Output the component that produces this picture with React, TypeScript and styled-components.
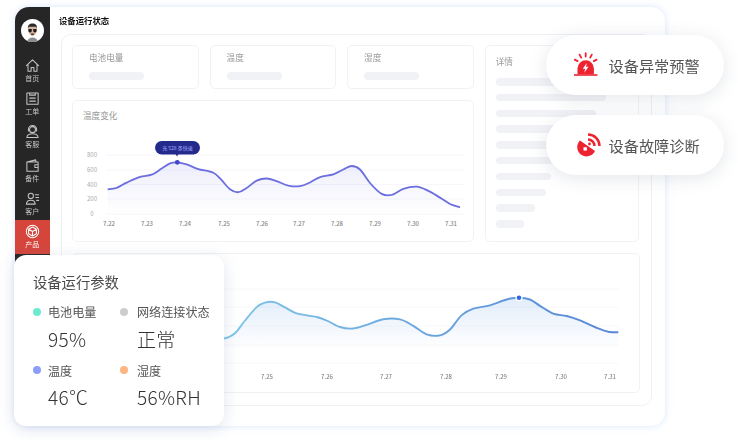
import React from 'react'
import styled, { createGlobalStyle } from 'styled-components'

const FONT = '"Noto Sans CJK SC", "Noto Sans", sans-serif'

const GlobalStyle = createGlobalStyle`
  html, body {
    margin: 0;
    padding: 0;
    background: #fff;
    font-family: ${FONT};
  }
  * {
    box-sizing: border-box;
  }
`

type Pt = [number, number]

// the points are read off by eye, so even them out a little first
function relax(pts: Pt[]): Pt[] {
  return pts.map((p, i) => {
    const a = pts[i - 1]
    const b = pts[i + 1]
    if (!a || !b) return p
    return [p[0], (a[1] + 8 * p[1] + b[1]) / 10] as Pt
  })
}

// smooth line through the points, catmull-rom to bezier
function smooth(pts: Pt[]) {
  let d = `M${pts[0][0]} ${pts[0][1]}`
  for (let i = 0; i < pts.length - 1; i++) {
    const p0 = pts[i - 1] || pts[i]
    const p1 = pts[i]
    const p2 = pts[i + 1]
    const p3 = pts[i + 2] || p2
    const c1x = p1[0] + (p2[0] - p0[0]) / 6
    const c1y = p1[1] + (p2[1] - p0[1]) / 6
    const c2x = p2[0] - (p3[0] - p1[0]) / 6
    const c2y = p2[1] - (p3[1] - p1[1]) / 6
    d += ` C${c1x.toFixed(1)} ${c1y.toFixed(1)} ${c2x.toFixed(1)} ${c2y.toFixed(1)} ${p2[0].toFixed(1)} ${p2[1].toFixed(1)}`
  }
  return d
}

const tempRaw: Pt[] = [
  [113, 268], [140, 265], [170, 248], [210, 229], [245, 226], [275, 205], [300, 189], [322, 186],
  [350, 192], [385, 208], [430, 217], [455, 240], [480, 270], [505, 279], [530, 265], [560, 240],
  [590, 234], [620, 243], [655, 258], [690, 260], [720, 248], [750, 230], [790, 224], [820, 208],
  [845, 196], [870, 205], [900, 250], [935, 285], [965, 287], [1000, 265], [1040, 258], [1075, 272],
  [1110, 293], [1140, 313], [1170, 322],
]
const tempLine: Pt[] = relax(tempRaw.map(([x, y]) => [70 + x / 3, 100 + y / 3]))

const humRaw: Pt[] = [
  [-60, 300], [12, 300], [45, 285], [75, 245], [110, 201], [135, 190], [165, 188], [195, 205], [230, 224],
  [290, 234], [320, 243], [360, 266], [400, 270], [440, 258], [490, 239], [540, 239], [580, 260],
  [620, 289], [660, 291], [690, 275], [725, 225], [760, 208], [810, 200], [860, 180], [897, 175],
  [930, 180], [960, 200], [1000, 226], [1040, 230], [1080, 243], [1130, 268], [1165, 279], [1195, 280],
]
const humLine: Pt[] = relax(humRaw.map(([x, y]) => [220 + x / 3, 240 + y / 3]))

const tempTicks = [
  ['7.22', 109], ['7.23', 147], ['7.24', 185], ['7.25', 224], ['7.26', 262],
  ['7.27', 299], ['7.28', 337], ['7.29', 375], ['7.30', 413], ['7.31', 451],
] as const
const tempGrid = [
  ['800', 155], ['600', 170], ['400', 184.5], ['200', 199], ['0', 214],
] as const
const humTicks = [
  ['7.25', 267], ['7.26', 327], ['7.27', 386], ['7.28', 446], ['7.29', 501], ['7.30', 561], ['7.31', 610],
] as const
const humGrid = [290, 308, 327, 346, 364]

const detailBars = [94, 110, 100, 90, 76, 66, 55, 50, 39, 28]

const Stage = styled.div`
  position: relative;
  width: 738px;
  height: 440px;
  overflow: hidden;
  background: #fff;
  padding: 7px 0 0 15px;
`

const Window = styled.div`
  display: flex;
  width: 650px;
  height: 419px;
  background: #fff;
  border-radius: 14px;
  box-shadow: 0 0 7px rgba(185, 208, 250, 0.55);
  filter: blur(0.3px);
`

const Sidebar = styled.nav`
  display: flex;
  flex-direction: column;
  flex: 0 0 34.5px;
  margin-bottom: 12px;
  background: #262626;
  border-radius: 14px 0 0 0;
  padding-top: 12px;
`

const Avatar = styled.div`
  width: 23px;
  height: 23px;
  margin: 0 0 11.5px 6px;
  border-radius: 50%;
  background: #fff;
  overflow: hidden;
  svg {
    display: block;
  }
`

const NavItem = styled.div<{ $active?: boolean }>`
  display: flex;
  flex-direction: column;
  align-items: center;
  height: 33.4px;
  padding-top: 4px;
  background: ${p => (p.$active ? '#d5453b' : 'transparent')};
  color: ${p => (p.$active ? '#fff' : '#c4c4c4')};
  font-size: 7px;
  line-height: 9px;
  svg {
    width: 15px;
    height: 15px;
    margin-bottom: 1px;
    fill: none;
    stroke: currentColor;
    stroke-width: 1.1;
    stroke-linejoin: round;
    stroke-linecap: round;
  }
`

const Main = styled.main`
  flex: 1;
  display: flex;
  flex-direction: column;
  padding-left: 9.5px;
`

const PageTitle = styled.h1`
  margin: 0;
  height: 27px;
  font-size: 8.4px;
  line-height: 26px;
  font-weight: 700;
  color: #111;
`

const Panel = styled.section`
  width: 591px;
  height: 372px;
  margin-left: 1.5px;
  border: 1px solid #eef0f4;
  border-radius: 10px;
  padding: 10px 12px 0 10.5px;
`

const TopArea = styled.div`
  display: flex;
  gap: 11px;
`

const LeftColumn = styled.div`
  display: flex;
  flex-direction: column;
  gap: 11px;
  width: 402px;
`

const StatRow = styled.div`
  display: flex;
  gap: 11px;
`

const Box = styled.div`
  background: #fff;
  border: 1px solid #f1f2f5;
  border-radius: 5px;
`

const StatCard = styled(Box)`
  flex: 1;
  height: 44px;
  padding: 4px 0 0 16px;
`

const SoftLabel = styled.div`
  font-size: 8.6px;
  line-height: 14px;
  color: #999;
`

const SkeletonBar = styled.div<{ $w: number }>`
  width: ${p => p.$w}px;
  height: 7.5px;
  border-radius: 4px;
  background: #f1f2f6;
`

const StatBar = styled(SkeletonBar)`
  margin-top: 8px;
`

const ChartCard = styled(Box)`
  position: relative;
  height: 142px;
`

const ChartTitle = styled(SoftLabel)`
  padding: 6.5px 0 0 10px;
`

const FloatSvg = styled.svg`
  position: absolute;
  left: -1px;
  top: -1px;
`

const DetailCard = styled(Box)`
  width: 154px;
  height: 197px;
  padding: 7.5px 0 0 10px;
`

const DetailBars = styled.div`
  display: flex;
  flex-direction: column;
  gap: 8.3px;
  margin-top: 10.5px;
`

const WideCard = styled(Box)`
  height: 140px;
  width: 568px;
  margin-top: 11px;
  svg {
    display: block;
  }
`

const ParamCard = styled.aside`
  position: absolute;
  left: 14px;
  top: 255px;
  width: 210px;
  height: 171px;
  padding: 17px 0 0 19px;
  background: #fff;
  border-radius: 12px;
  box-shadow: 0 3px 16px rgba(110, 130, 175, 0.22);
`

const ParamTitle = styled.div`
  font-size: 14.3px;
  line-height: 20px;
  color: #4a4a4a;
`

const ParamGrid = styled.div`
  display: grid;
  grid-template-columns: 87px 1fr;
  row-gap: 9px;
  margin-top: 11px;
`

const ParamCell = styled.div<{ $gap: number }>`
  display: grid;
  grid-template-columns: 8px 1fr;
  column-gap: ${p => p.$gap}px;
  align-items: center;
`

const Dot = styled.span<{ $c: string }>`
  width: 8px;
  height: 8px;
  border-radius: 50%;
  background: ${p => p.$c};
`

const ParamLabel = styled.div`
  font-size: 12.1px;
  line-height: 17px;
  color: #555;
  white-space: nowrap;
`

const ParamValue = styled.div`
  grid-column: 2;
  font-size: 19px;
  letter-spacing: 0.3px;
  line-height: 28px;
  margin-top: 4.5px;
  font-weight: 300;
  color: #333;
  white-space: nowrap;
`

const Pills = styled.div`
  position: absolute;
  left: 546px;
  top: 35px;
  display: flex;
  flex-direction: column;
  gap: 20px;
`

const Pill = styled.div`
  display: flex;
  align-items: center;
  gap: 10.5px;
  width: 178px;
  height: 60px;
  padding-left: 28px;
  background: #fff;
  border-radius: 30px;
  box-shadow: 0 3px 18px rgba(90, 100, 130, 0.16);
  font-size: 15.2px;
  color: #555;
  white-space: nowrap;
  svg {
    flex: none;
    overflow: visible;
  }
`

const navItems: { label: string; icon: React.ReactNode; active?: boolean }[] = [
  {
    label: '首页',
    icon: <path d="M1.5 8.2 8 2l6.5 6.2M3.2 7v7.2h3.3v-4h3v4h3.3V7" />,
  },
  {
    label: '工单',
    icon: <path d="M2 2.2h12v12H2zM5 2.2v2.2h6V2.2M5 7.6h6M5 10.8h6" />,
  },
  {
    label: '客服',
    icon: (
      <>
        <circle cx="8" cy="6" r="3.2" />
        <path d="M3.6 7.4V6a4.4 4.4 0 0 1 8.8 0v1.4M2 14.4c.3-2.6 2.6-4 6-4s5.7 1.4 6 4z" />
      </>
    ),
  },
  {
    label: '备件',
    icon: <path d="M2 4.2 11.5 2v2.2M2 4.2h12v10H2zM10.5 7.2H14v3h-3.5z" />,
  },
  {
    label: '客户',
    icon: (
      <>
        <circle cx="6.2" cy="5.2" r="2.8" />
        <path d="M1.5 14c.2-2.8 2-4.2 4.700-4.200s4.500 1.400 4.700 4.200zM11 4h3.500M11.500 7h3M12.500 10h2" />
      </>
    ),
  },
  {
    label: '产品',
    active: true,
    icon: (
      <>
        <circle cx="8" cy="8" r="6.6" />
        <path d="M8 3.2 12.2 5.6v4.800L8 12.800 3.800 10.400V5.600zM3.800 5.600 8 8l4.200-2.400M8 8v4.800" />
      </>
    ),
  },
]

const params = [
  { color: '#6fe8d2', label: '电池电量', value: '95%', gap: 7 },
  { color: '#cdcdcd', label: '网络连接状态', value: '正常', gap: 9 },
  { color: '#8d9dfb', label: '温度', value: '46℃', gap: 7 },
  { color: '#ffb581', label: '湿度', value: '56%RH', gap: 9 },
]

function AvatarFace() {
  return (
    <svg width="23" height="23" viewBox="0 0 23 23">
      <path d="M6 23c.5-3 2.8-4.500 5.500-4.500s5 1.500 5.500 4.500z" fill="#8b8f92" />
      <ellipse cx="11.5" cy="11" rx="4.3" ry="5.6" fill="#d9b39c" />
      <path d="M7 10c-.6-4 1.700-5.600 4.500-5.600S16.600 6 16 10l-.8-2.200H7.800z" fill="#2a2a2a" />
      <path d="M7.400 10h3.400v1.800a1.500 1.500 0 0 1-3.400 0zM12.200 10h3.400v1.800a1.500 1.500 0 0 1-3.400 0z" fill="#1c1c1c" />
      <path d="M9.800 14.600h3.400l-.6 1.600h-2.200z" fill="#4a4038" />
    </svg>
  )
}

function AlarmIcon() {
  return (
    <svg width="24" height="24" viewBox="0 0 24 24">
      <path d="M0 21.2h23.5v1.600H0z" fill="#ee2330" />
      <path d="M3.5 21.2V15.500a8.200 8.200 0 0 1 16.400 0v5.700z" fill="#ee2330" />
      <path d="M12.800 10 8.800 15.800h2.400l-.9 4 4.200-6H12z" fill="#fff" />
      <path
        d="M11.7.2v3.400M5.600 1.600l1.600 3M17.800 1.600l-1.600 3M.8 6.600l2.800 1.500M22.600 6.600l-2.800 1.500"
        stroke="#ee2330"
        strokeWidth="1.8"
        strokeLinecap="round"
        fill="none"
      />
    </svg>
  )
}

function DishIcon() {
  return (
    <svg width="24" height="24" viewBox="0 0 24 24">
      <path d="M6 7.500A9.300 9.300 0 1 0 21 18z" fill="#ee2330" />
      <path d="M9.500 14.200h3.400v3.400H9.500z" fill="#fff" />
      <path
        d="M14 6.500a6.500 6.500 0 0 1 6.500 6.500M14 1.500A11.500 11.500 0 0 1 25.500 13"
        stroke="#ee2330"
        strokeWidth="2.5"
        fill="none"
      />
      <circle cx="15.5" cy="11" r="1.4" fill="#ee2330" />
    </svg>
  )
}

function TempChart() {
  const line = smooth(tempLine)
  return (
    <FloatSvg width="402" height="142" viewBox="72 100 402 142">
      <defs>
        <linearGradient id="tempFill" x1="0" y1="0" x2="0" y2="1">
          <stop offset="0" stopColor="#6a6ce0" stopOpacity="0.12" />
          <stop offset="1" stopColor="#6a6ce0" stopOpacity="0" />
        </linearGradient>
      </defs>
      {tempGrid.map(([label, y]) => (
        <g key={label}>
          <line x1="106" x2="464" y1={y} y2={y} stroke="#f4f4fa" strokeWidth="0.8" />
          <text x="92" y={y + 2} fontSize="6" fill="#aaa" textAnchor="middle" fontFamily={FONT}>
            {label}
          </text>
        </g>
      ))}
      <path d={`${line} L460 214 L108 214 Z`} fill="url(#tempFill)" />
      <path d={line} fill="none" stroke="#6c6ede" strokeWidth="1.8" />
      {tempTicks.map(([label, x]) => (
        <text key={label} x={x} y="226" fontSize="6" fontWeight="500" fill="#888" textAnchor="middle" fontFamily={FONT}>
          {label}
        </text>
      ))}
      <rect x="155" y="141" width="45" height="13.5" rx="6.7" fill="#232a8c" />
      <path d="M175.500 154h3l-1.500 2.500z" fill="#232a8c" />
      <text x="177.5" y="149.8" fontSize="5" fill="#a6aeff" textAnchor="middle" fontFamily={FONT}>
        充 528 条快速
      </text>
      <circle cx="177.3" cy="162.3" r="2.4" fill="#3f46c8" />
    </FloatSvg>
  )
}

function HumChart() {
  const line = smooth(humLine)
  return (
    <svg width="566" height="138" viewBox="73 255 566 138">
      <defs>
        <linearGradient id="humStroke" gradientUnits="userSpaceOnUse" x1="224" y1="0" x2="620" y2="0">
          <stop offset="0" stopColor="#7fc6e8" />
          <stop offset="1" stopColor="#5685d6" />
        </linearGradient>
        <linearGradient id="humFill" x1="0" y1="0" x2="0" y2="1">
          <stop offset="0" stopColor="#5f9be6" stopOpacity="0.18" />
          <stop offset="1" stopColor="#5f9be6" stopOpacity="0" />
        </linearGradient>
      </defs>
      {humGrid.map(y => (
        <line key={y} x1="180" x2="619" y1={y} y2={y} stroke="#f5f6fa" strokeWidth="0.8" />
      ))}
      <path d={`${line} L618 350 L200 350 Z`} fill="url(#humFill)" />
      <path d={line} fill="none" stroke="url(#humStroke)" strokeWidth="1.9" />
      {humTicks.map(([label, x]) => (
        <text key={label} x={x} y="380" fontSize="6" fontWeight="500" fill="#888" textAnchor="middle" fontFamily={FONT}>
          {label}
        </text>
      ))}
      <circle cx="519" cy="298.7" r="3.6" fill="#fff" />
      <circle cx="519" cy="298.7" r="2.3" fill="#2f6ae0" />
    </svg>
  )
}

export default function App() {
  return (
    <>
      <GlobalStyle />
      <Stage>
        <Window>
          <Sidebar>
            <Avatar>
              <AvatarFace />
            </Avatar>
            {navItems.map(item => (
              <NavItem key={item.label} $active={item.active}>
                <svg viewBox="0 0 16 16">{item.icon}</svg>
                {item.label}
              </NavItem>
            ))}
          </Sidebar>
          <Main>
            <PageTitle>设备运行状态</PageTitle>
            <Panel>
              <TopArea>
                <LeftColumn>
                  <StatRow>
                    {['电池电量', '温度', '湿度'].map(label => (
                      <StatCard key={label}>
                        <SoftLabel>{label}</SoftLabel>
                        <StatBar $w={55} />
                      </StatCard>
                    ))}
                  </StatRow>
                  <ChartCard>
                    <ChartTitle>温度变化</ChartTitle>
                    <TempChart />
                  </ChartCard>
                </LeftColumn>
                <DetailCard>
                  <SoftLabel>详情</SoftLabel>
                  <DetailBars>
                    {detailBars.map((w, i) => (
                      <SkeletonBar key={i} $w={w} />
                    ))}
                  </DetailBars>
                </DetailCard>
              </TopArea>
              <WideCard>
                <HumChart />
              </WideCard>
            </Panel>
          </Main>
        </Window>

        <ParamCard>
          <ParamTitle>设备运行参数</ParamTitle>
          <ParamGrid>
            {params.map(p => (
              <ParamCell key={p.label} $gap={p.gap}>
                <Dot $c={p.color} />
                <ParamLabel>{p.label}</ParamLabel>
                <ParamValue>{p.value}</ParamValue>
              </ParamCell>
            ))}
          </ParamGrid>
        </ParamCard>

        <Pills>
          <Pill>
            <AlarmIcon />
            设备异常预警
          </Pill>
          <Pill>
            <DishIcon />
            设备故障诊断
          </Pill>
        </Pills>
      </Stage>
    </>
  )
}
